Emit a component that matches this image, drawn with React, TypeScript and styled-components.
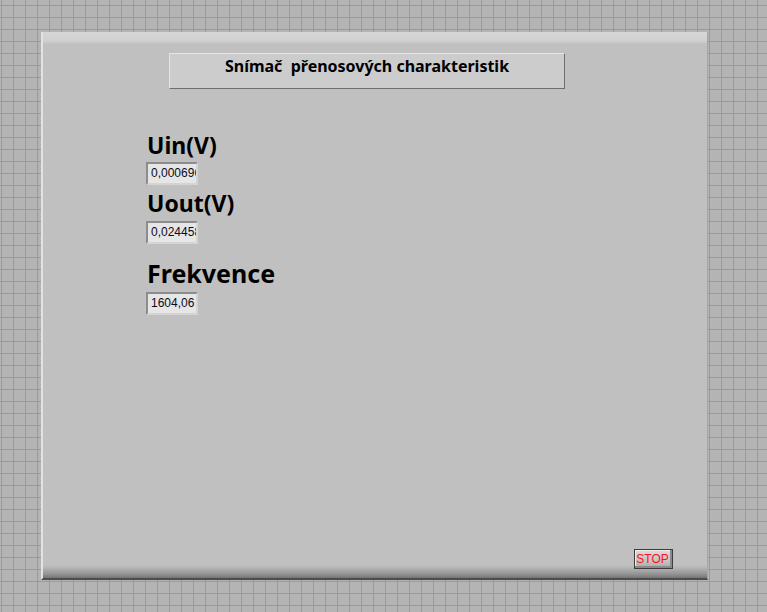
import React from "react";
import styled, { createGlobalStyle } from "styled-components";

const Global = createGlobalStyle`
  html, body { margin: 0; padding: 0; }
  body {
    width: 767px;
    height: 612px;
    overflow: hidden;
    background-color: #b4b4b4;
    background-image:
      linear-gradient(to right, #9a9a9a 1px, transparent 1px),
      linear-gradient(to bottom, #9a9a9a 1px, transparent 1px);
    background-size: 12px 12px;
    background-position: 1px 5px;
  }
`;

const Page = styled.div`
  padding: 32px 0 0 41px;
`;

const Panel = styled.div`
  box-sizing: border-box;
  width: 667px;
  height: 548px;
  display: flex;
  flex-direction: column;
  border-left: 2px solid #e2e2e2;
  border-right: 1px solid #a6a6a6;
  border-bottom: 2px solid #4c4c4c;
  background:
    linear-gradient(to bottom, #d6d6d6 0px, #d2d2d2 8px, #c6c6c6 11px, #c0c0c0 12px, transparent 12px),
    linear-gradient(to top, #747474 0px, #949494 4px, #b4b4b4 10px, #c0c0c0 13px, transparent 13px),
    #c0c0c0;
`;

const TitleBox = styled.div`
  box-sizing: border-box;
  margin: 21px 0 0 126px;
  width: 396px;
  height: 36px;
  background: #cccccc;
  border-top: 1px solid #e4e4e4;
  border-left: 1px solid #e4e4e4;
  border-right: 1px solid #6e6e6e;
  border-bottom: 1px solid #6e6e6e;
  display: flex;
  align-items: flex-start;
  justify-content: center;
  padding: 1px 0 0 0;
  font-family: "Noto Sans", sans-serif;
  font-weight: 700;
  font-size: 16px;
  line-height: 22px;
  color: #000;
  white-space: pre;
`;

const Controls = styled.div`
  display: flex;
  flex-direction: column;
  align-items: flex-start;
  margin-left: 103px;
`;

const Label = styled.div<{ $size: number; $top: number }>`
  margin-top: ${(p) => p.$top}px;
  margin-left: 1px;
  font-family: "Noto Sans", sans-serif;
  font-weight: 700;
  font-size: ${(p) => p.$size}px;
  line-height: ${(p) => p.$size + 3}px;
  color: #000;
`;

const Indicator = styled.div<{ $top: number }>`
  box-sizing: border-box;
  margin-top: ${(p) => p.$top}px;
  width: 52px;
  height: 23px;
  background: #e6e6e6;
  border-top: 2px solid #8c8c8c;
  border-left: 2px solid #8c8c8c;
  border-right: 2px solid #d4d4d4;
  border-bottom: 2px solid #d4d4d4;
  padding: 0 0 0 3px;
  overflow: hidden;
  white-space: nowrap;
  font-family: "Liberation Sans", sans-serif;
  font-size: 12px;
  line-height: 19px;
  color: #0a0a1a;
`;

const StopButton = styled.button`
  box-sizing: border-box;
  margin: auto 34px 9px auto;
  width: 39px;
  height: 20px;
  padding: 0 2px 0 0;
  border: 1px solid #3c3c3c;
  background: linear-gradient(to bottom, #dcdcdc, #c4c4c4 60%, #a8a8a8);
  box-shadow: inset -2px -2px 0 #8a8a8a, inset 1px 1px 0 #eeeeee;
  font-family: "Liberation Sans", sans-serif;
  font-size: 12px;
  line-height: 18px;
  color: #ff1020;
`;

export default function App() {
  return (
    <>
      <Global />
      <Page>
        <Panel>
          <TitleBox>{"Snímač  přenosových charakteristik"}</TitleBox>
          <Controls>
            <Label $size={23} $top={43}>Uin(V)</Label>
            <Indicator $top={4}>0,000696</Indicator>
            <Label $size={23} $top={5}>Uout(V)</Label>
            <Indicator $top={5}>0,024458</Indicator>
            <Label $size={25} $top={15}>Frekvence</Label>
            <Indicator $top={5}>1604,06</Indicator>
          </Controls>
          <StopButton>STOP</StopButton>
        </Panel>
      </Page>
    </>
  );
}
